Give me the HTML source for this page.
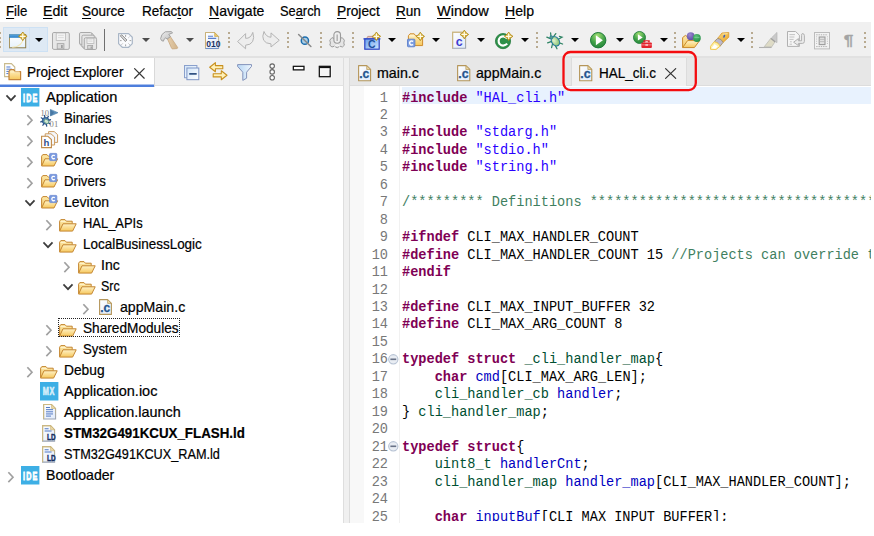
<!DOCTYPE html>
<html><head><meta charset="utf-8"><title>IDE</title>
<style>
html,body{margin:0;padding:0;background:#fff;}
body{width:874px;height:536px;position:relative;overflow:hidden;font-family:"Liberation Sans",sans-serif;font-kerning:none;}
.abs{position:absolute;}
.t{-webkit-text-stroke:0.22px currentColor;position:absolute;white-space:nowrap;transform-origin:0 0;line-height:20px;height:20px;font-family:"Liberation Sans",sans-serif;}
u{text-decoration:underline;text-underline-offset:2px;text-decoration-thickness:1px;}
#clip{position:absolute;left:0;top:0;width:871px;height:522.5px;overflow:hidden;background:#fff;}
#toolbar{position:absolute;left:0;top:21.7px;width:871px;height:34.6px;background:#f0f0f0;}
#tbline{position:absolute;left:0;top:56.2px;width:871px;height:1.7px;background:#e1e1e1;}
#lhead{position:absolute;left:0;top:57.9px;width:343px;height:27.6px;background:#f1f1f1;border-right:1px solid #dedede;border-bottom:1px solid #e2e2e2;}
#ltab{position:absolute;left:0;top:58px;width:154px;height:29px;background:#fff;border-right:1px solid #d9d9d9;}
#lblue{position:absolute;left:0;top:85px;width:154px;height:2px;background:#4d7edc;border-top:1px solid #a9c0ee;margin-top:-1px;}
#lbody{position:absolute;left:0;top:86.3px;width:343px;height:440px;background:#fff;border-right:1px solid #dedede;}
#sash{position:absolute;left:344px;top:57.9px;width:5.2px;height:470px;background:#f0f0f0;}
#ehead{position:absolute;left:349.2px;top:57.9px;width:522px;height:27.6px;background:#e7e7e7;border-left:1px solid #dcdcdc;border-bottom:1px solid #dddddd;}
#etab{position:absolute;left:571px;top:57.9px;width:115.5px;height:28.4px;background:#f1f1f1;border-left:1px solid #dcdcdc;border-right:1px solid #dcdcdc;box-sizing:border-box;}
#ebody{position:absolute;left:349.2px;top:86.3px;width:522px;height:440px;background:#fff;border-left:1px solid #dcdcdc;}
#ruler{position:absolute;left:350.2px;top:86.3px;width:14px;height:440px;background:#f8f8f8;}
#hl{position:absolute;left:401.8px;top:86.6px;width:470px;height:17.6px;background:#e8f2fe;}
.ln{position:absolute;left:363.4px;width:25px;transform-origin:100% 0;transform:scaleX(0.9714);text-align:right;font-family:"Liberation Mono",monospace;font-size:14px;line-height:17.46px;height:17.46px;color:#787878;white-space:pre;}
.cl{position:absolute;left:402.2px;transform-origin:0 0;transform:scaleX(0.9714);font-family:"Liberation Mono",monospace;font-size:14px;line-height:17.46px;height:17.46px;color:#000;white-space:pre;letter-spacing:0px;}
.k{color:#7f0055;font-weight:bold;}
.s{color:#2a00ff;}
.c{color:#3f7f5f;}
.f{color:#0000c0;}
.ty{color:#005032;}
.ic{position:absolute;overflow:visible;}
.hover{position:absolute;left:3.4px;top:27.3px;width:44.4px;height:24.4px;box-sizing:border-box;background:#dee9f4;border:1px solid #cde1f4;}
.hover i{position:absolute;left:24.5px;top:0;width:1px;height:100%;background:#d3e4f4;}
.dd{position:absolute;width:0;height:0;border-left:4.3px solid transparent;border-right:4.3px solid transparent;border-top:4.6px solid #000;}
.dd.g{border-top-color:#4c4c4c;}
.sepd{position:absolute;width:2px;height:16.4px;top:32.2px;background:repeating-linear-gradient(to bottom,#b8aa90 0,#b8aa90 1.9px,transparent 1.9px,transparent 4.72px);}
.sepd.w{}
</style></head><body><div id="clip">

<span class="t" style="left:5.80px;top:1.20px;font-size:15.00px;transform:scaleX(0.8854);color:#000;"><u>F</u>ile</span>
<span class="t" style="left:42.90px;top:1.20px;font-size:15.00px;transform:scaleX(0.9440);color:#000;"><u>E</u>dit</span>
<span class="t" style="left:82.20px;top:1.20px;font-size:15.00px;transform:scaleX(0.9005);color:#000;"><u>S</u>ource</span>
<span class="t" style="left:141.50px;top:1.20px;font-size:15.00px;transform:scaleX(0.9014);color:#000;">Refac<u>t</u>or</span>
<span class="t" style="left:208.80px;top:1.20px;font-size:15.00px;transform:scaleX(0.9341);color:#000;"><u>N</u>avigate</span>
<span class="t" style="left:279.90px;top:1.20px;font-size:15.00px;transform:scaleX(0.8564);color:#000;">Se<u>a</u>rch</span>
<span class="t" style="left:337.20px;top:1.20px;font-size:15.00px;transform:scaleX(0.9146);color:#000;"><u>P</u>roject</span>
<span class="t" style="left:396.00px;top:1.20px;font-size:15.00px;transform:scaleX(0.9049);color:#000;"><u>R</u>un</span>
<span class="t" style="left:437.10px;top:1.20px;font-size:15.00px;transform:scaleX(0.9672);color:#000;"><u>W</u>indow</span>
<span class="t" style="left:505.10px;top:1.20px;font-size:15.00px;transform:scaleX(0.9400);color:#000;"><u>H</u>elp</span>
<div id="toolbar"></div><div id="tbline"></div>
<div id="lhead"></div><div id="lbody"></div><div id="ltab"></div><div id="lblue"></div><div id="sash"></div>
<div id="ehead"></div><div id="etab"></div><div id="ebody"></div><div id="ruler"></div><div id="hl"></div>
<svg width="0" height="0" style="position:absolute"><defs>
<linearGradient id="gWin" x1="0" y1="0" x2="0" y2="1"><stop offset="0" stop-color="#ffffff"/><stop offset="1" stop-color="#e6f2fb"/></linearGradient>
<linearGradient id="gTitle" x1="0" y1="0" x2="0" y2="1"><stop offset="0" stop-color="#5fa9e2"/><stop offset="1" stop-color="#2b7fc6"/></linearGradient>
<linearGradient id="gStar" x1="0" y1="0" x2="1" y2="1"><stop offset="0" stop-color="#e9c95a"/><stop offset="1" stop-color="#c79a1c"/></linearGradient>
<linearGradient id="gFold" x1="0" y1="0" x2="0" y2="1"><stop offset="0" stop-color="#fff3c8"/><stop offset="1" stop-color="#f6c75c"/></linearGradient>
<linearGradient id="gFoldB" x1="0" y1="0" x2="0" y2="1"><stop offset="0" stop-color="#fde9a8"/><stop offset="1" stop-color="#f3c869"/></linearGradient>
<linearGradient id="gDoc" x1="0" y1="0" x2="1" y2="1"><stop offset="0" stop-color="#ffffff"/><stop offset="1" stop-color="#dfeafb"/></linearGradient>
<linearGradient id="gDocS" x1="0" y1="0" x2="0" y2="1"><stop offset="0" stop-color="#c9b57c"/><stop offset="1" stop-color="#9aa3b4"/></linearGradient>
<linearGradient id="gCbox" x1="0" y1="0" x2="1" y2="1"><stop offset="0" stop-color="#6aa2ee"/><stop offset="1" stop-color="#cfe5fc"/></linearGradient>
<radialGradient id="gPlay" cx="0.45" cy="0.2" r="0.9"><stop offset="0" stop-color="#9fdc72"/><stop offset="0.55" stop-color="#3fa047"/><stop offset="1" stop-color="#1f7f3a"/></radialGradient>
<radialGradient id="gBug" cx="0.4" cy="0.35" r="0.8"><stop offset="0" stop-color="#e3f3cf"/><stop offset="1" stop-color="#6fb45a"/></radialGradient>
<radialGradient id="gPurple" cx="0.4" cy="0.3" r="0.8"><stop offset="0" stop-color="#9a8ad0"/><stop offset="1" stop-color="#5a45a0"/></radialGradient>
<radialGradient id="gGreen" cx="0.4" cy="0.3" r="0.8"><stop offset="0" stop-color="#5cc07a"/><stop offset="1" stop-color="#1f8a42"/></radialGradient>
<linearGradient id="gGold" x1="0" y1="0" x2="1" y2="1"><stop offset="0" stop-color="#f9d982"/><stop offset="1" stop-color="#e8a428"/></linearGradient>
<linearGradient id="gFun" x1="0" y1="0" x2="1" y2="0"><stop offset="0" stop-color="#b7d6f4"/><stop offset="1" stop-color="#eef6fd"/></linearGradient>
<linearGradient id="gCol" x1="0" y1="0" x2="1" y2="1"><stop offset="0" stop-color="#d3e6f9"/><stop offset="1" stop-color="#ffffff"/></linearGradient>
<linearGradient id="gHam" x1="0" y1="0" x2="1" y2="1"><stop offset="0" stop-color="#f0f0f0"/><stop offset="1" stop-color="#b9b9b9"/></linearGradient>
<linearGradient id="gHandle" x1="0" y1="0" x2="1" y2="0"><stop offset="0" stop-color="#e6cfae"/><stop offset="1" stop-color="#d2b48a"/></linearGradient>
</defs></svg>
<div class="sepd" style="left:-0.8px;top:32.4px;width:2px"></div>
<div class="hover"><i></i></div>
<svg class="ic" style="left:9.00px;top:32.00px;" width="18.00" height="16.40" viewBox="0 0 18.00 16.40" preserveAspectRatio="none"><rect x="0.5" y="2.6" width="16.2" height="13.2" fill="url(#gWin)" stroke="#8d7d49" stroke-width="1"/><path d="M14.2 6.2C13.6 11.5 9.5 15 3.2 15.4" fill="none" stroke="#f3e3a2" stroke-width="1.1" opacity="0.85"/><rect x="0.3" y="2.2" width="10.6" height="3.6" fill="url(#gTitle)"/><path d="M0.5 6V15.8" stroke="#a89763" stroke-width="1"/><polygon points="13.80,0.00 15.61,2.49 18.10,4.30 15.61,6.11 13.80,8.60 11.99,6.11 9.50,4.30 11.99,2.49" fill="url(#gStar)" stroke="#b38b1a" stroke-width="0.9" stroke-linejoin="round"/><path d="M13.80 1.93V6.67M11.44 4.30H16.16" stroke="#fffbe6" stroke-width="1.25" stroke-linecap="round" fill="none"/></svg>
<div class="dd " style="left:34.80px;top:37.9px"></div>
<svg class="ic" style="left:52.30px;top:31.80px;" width="17.80" height="17.90" viewBox="0 0 17.80 17.90" preserveAspectRatio="none"><rect x="0.50" y="0.50" width="16.80" height="16.90" rx="1.4" fill="#e7e7e7" stroke="#a9a9a9" stroke-width="1"/><rect x="4.20" y="1.00" width="9.41" height="7.60" fill="#f3f3f3" stroke="#b9b9b9" stroke-width="0.8"/><path d="M6.04 3.37H11.76M6.04 5.57H11.76" stroke="#d3d3d3" stroke-width="0.7"/><rect x="5.20" y="11.65" width="6.72" height="5.25" fill="#dadada" stroke="#a3a3a3" stroke-width="0.8"/><rect x="9.24" y="13.01" width="1.34" height="3.04" fill="#8f8f8f"/></svg>
<svg class="ic" style="left:79.00px;top:31.80px;" width="18.20" height="18.00" viewBox="0 0 18.20 18.00" preserveAspectRatio="none"><rect x="0.50" y="0.50" width="12.40" height="11.90" rx="1.4" fill="#e7e7e7" stroke="#a9a9a9" stroke-width="1"/><path d="M0.9 12.2L5.6 17.4M12.7 0.9L17.3 6" stroke="#a9a9a9" stroke-width="0.9"/><rect x="2.90" y="3.20" width="12.40" height="11.90" rx="1.4" fill="#e7e7e7" stroke="#a9a9a9" stroke-width="1"/><rect x="5.30" y="5.80" width="12.30" height="11.70" rx="1.4" fill="#e7e7e7" stroke="#a9a9a9" stroke-width="1"/><rect x="8.01" y="6.30" width="6.89" height="5.26" fill="#f3f3f3" stroke="#b9b9b9" stroke-width="0.8"/><path d="M9.36 7.79H13.54M9.36 9.31H13.54" stroke="#d3d3d3" stroke-width="0.7"/><rect x="8.74" y="13.52" width="4.92" height="3.48" fill="#dadada" stroke="#a3a3a3" stroke-width="0.8"/><rect x="11.70" y="14.46" width="0.98" height="2.11" fill="#8f8f8f"/></svg>
<div class="abs" style="left:103.8px;top:29.4px;width:1.3px;height:21.5px;background:#6f6f6f"></div>
<svg class="ic" style="left:118.00px;top:33.30px;" width="14.90" height="14.90" viewBox="0 0 14.90 14.90" preserveAspectRatio="none"><polygon points="0.6,0.6 10.6,0.6 14.3,4.3 14.3,10.6 10.6,14.3 4.3,14.3 0.6,10.6" fill="#fafbfd" stroke="#a9b6c6" stroke-width="1.2" stroke-linejoin="round"/><g stroke="#9a9a9a" stroke-width="0.9"><path d="M7.6 2V3.8M7.6 11.4V13.2M2 7.6H3.6M11.6 7.6H13.2M3.6 11.6L4.6 10.6M11.6 11.6L10.6 10.6M11.4 3.8L10.6 4.6"/></g><path d="M2.2 2.8L3.8 1.8L9 7L7.4 8.6Z" fill="#d4d4d4" stroke="#8f8f8f" stroke-width="0.9"/></svg>
<div class="dd g" style="left:141.90px;top:37.9px"></div>
<svg class="ic" style="left:159.90px;top:30.90px;" width="18.10" height="18.10" viewBox="0 0 18.10 18.10" preserveAspectRatio="none"><path d="M7.2 7.2L10.2 5.4L17.6 16.4Q17.9 17.2 17 17.6L12.6 17.9Q11.8 17.8 11.5 17Z" fill="url(#gHandle)" stroke="#c6a67d" stroke-width="0.8"/><path d="M0.6 7.6Q1 3 5.2 0.8L11.2 0.6L12.6 1.8L8.8 3.4L10.4 5.6L7 8.2L5.8 6.8Q3.6 8 3.4 10.2L1.6 9.6Z" fill="url(#gHam)" stroke="#9b9b9b" stroke-width="0.9" stroke-linejoin="round"/></svg>
<div class="dd g" style="left:186.30px;top:37.9px"></div>
<svg class="ic" style="left:205.20px;top:32.00px;" width="15.60" height="17.00" viewBox="0 0 15.60 17.00" preserveAspectRatio="none"><path d="M0.5 0.5H9.6L13.6 4.5V16.5H0.5Z" fill="url(#gDoc)" stroke="url(#gDocS)" stroke-width="1"/><path d="M0.5 16.5V0.5H9.6" fill="none" stroke="#c9b27a" stroke-width="1"/><path d="M0.5 16.5H13.6" stroke="#6f8fc4" stroke-width="1.1"/><path d="M9.6 0.5V4.5H13.6Z" fill="#e9c66a" stroke="#c9a648" stroke-width="0.6"/><path d="M3 4.2H8M3 6.4H11.2" stroke="#5b7fca" stroke-width="1.1"/><text x="1.3" y="15.2" font-family="Liberation Sans, sans-serif" font-weight="bold" font-size="8.6" fill="#1b3263" textLength="14.2" lengthAdjust="spacingAndGlyphs">010</text></svg>
<div class="sepd" style="left:227.60px"></div>
<svg class="ic" style="left:236.80px;top:32.00px;" width="17.00" height="17.00" viewBox="0 0 17.00 17.00" preserveAspectRatio="none"><path d="M0.6 9.6L8.6 1.6V6.3Q13.6 6.8 15.8 0.4Q17.6 6 15.6 9.6Q13.6 13 8.6 13.2V16.8Z" fill="#ededed" stroke="#b4b4b4" stroke-width="1" stroke-linejoin="round"/></svg>
<svg class="ic" style="left:262.10px;top:30.90px;" width="17.90" height="16.40" viewBox="0 0 17.90 16.40" preserveAspectRatio="none"><path d="M17.3 9.3L9 1.9V6.2Q4.2 6.2 2 0.5Q-0.2 5.6 1.6 9.2Q3.6 12.6 9 12.9V16Z" fill="#ededed" stroke="#b4b4b4" stroke-width="1" stroke-linejoin="round"/></svg>
<div class="sepd" style="left:287.10px"></div>
<svg class="ic" style="left:298.00px;top:34.00px;" width="13.60" height="13.00" viewBox="0 0 13.60 13.00" preserveAspectRatio="none"><circle cx="6.9" cy="6.7" r="3.6" fill="#a9cfe9" stroke="#1c6dad" stroke-width="1.5"/><path d="M0.6 0.5L12.9 12.5" stroke="#8a8a8a" stroke-width="1.5" stroke-linecap="round"/></svg>
<div class="sepd" style="left:319.70px"></div>
<svg class="ic" style="left:329.00px;top:31.00px;" width="16.20" height="17.40" viewBox="0 0 16.20 17.40" preserveAspectRatio="none"><path d="M0.8 9.2L3 6.6L5.2 7.6L11 7.6L13.2 6.6L15.4 9.2L14.8 12L15.4 14.2L13.4 16L11 15.2L8.2 16.8L5.4 15.2L3 16L0.8 14.2L1.4 12Z" fill="#e5e5e5" stroke="#9d9d9d" stroke-width="1" stroke-linejoin="round"/><rect x="4.9" y="0.6" width="6.6" height="11.6" rx="3.2" fill="#efefef" stroke="#9a9a9a" stroke-width="1.1"/><path d="M8.2 3.4V10" stroke="#b5b5b5" stroke-width="1.6"/><path d="M5.4 15.4L8.2 13.8L11 15.4" fill="none" stroke="#fafafa" stroke-width="1"/></svg>
<div class="sepd" style="left:352.40px"></div>
<svg class="ic" style="left:362.60px;top:31.60px;" width="17.80" height="17.80" viewBox="0 0 17.80 17.80" preserveAspectRatio="none"><path d="M3.6 6.6L4.8 4.4H9L10 6.6" fill="#e9c9c0" stroke="#b88a84" stroke-width="0.9"/><path d="M0.4 6.9H17.4" stroke="#2b44c4" stroke-width="1.3"/><rect x="1.8" y="7" width="14.4" height="10.2" fill="url(#gCbox)" stroke="#2b44c4" stroke-width="1.2"/><text x="5" y="15.6" font-family="Liberation Sans, sans-serif" font-weight="bold" font-size="10.5" fill="#1b4f9e">C</text><polygon points="13.40,0.10 15.16,2.54 17.60,4.30 15.16,6.06 13.40,8.50 11.64,6.06 9.20,4.30 11.64,2.54" fill="url(#gStar)" stroke="#b38b1a" stroke-width="0.9" stroke-linejoin="round"/><path d="M13.40 1.99V6.61M11.09 4.30H15.71" stroke="#fffbe6" stroke-width="1.25" stroke-linecap="round" fill="none"/></svg>
<div class="dd " style="left:387.90px;top:37.9px"></div>
<svg class="ic" style="left:407.00px;top:31.50px;" width="17.60" height="15.40" viewBox="0 0 17.60 15.40" preserveAspectRatio="none"><path d="M1.4 13.6V3.8L3 1.8H7.2L8.6 3.8H15.6V13.6Z" fill="url(#gFold)" stroke="#d08c2c" stroke-width="1" stroke-linejoin="round"/><path d="M2.4 3.9H7.6" stroke="#fff7da" stroke-width="0.9"/><rect x="0.5" y="7.2" width="7.4" height="7.6" rx="0.8" fill="#7e9fe2" stroke="#5c80cc" stroke-width="0.9"/><path d="M6.2 9.4Q3.2 8 2.6 10.9Q3 13.9 6.2 12.6" fill="none" stroke="#fff" stroke-width="1.5"/><polygon points="13.30,0.20 15.06,2.64 17.50,4.40 15.06,6.16 13.30,8.60 11.54,6.16 9.10,4.40 11.54,2.64" fill="url(#gStar)" stroke="#b38b1a" stroke-width="0.9" stroke-linejoin="round"/><path d="M13.30 2.09V6.71M10.99 4.40H15.61" stroke="#fffbe6" stroke-width="1.25" stroke-linecap="round" fill="none"/></svg>
<div class="dd " style="left:432.30px;top:37.9px"></div>
<svg class="ic" style="left:452.40px;top:30.40px;" width="16.80" height="18.80" viewBox="0 0 16.80 18.80" preserveAspectRatio="none"><path d="M0.6 2.2H13.6V18.2H0.6Z" fill="url(#gDoc)" stroke="url(#gDocS)" stroke-width="1.1"/><path d="M0.6 18.2V2.2H10" fill="none" stroke="#cbb782" stroke-width="1.1"/><text x="3.8" y="15.6" font-family="Liberation Sans, sans-serif" font-weight="bold" font-size="12.5" fill="#3d3ed0">c</text><polygon points="12.30,0.20 14.11,2.69 16.60,4.50 14.11,6.31 12.30,8.80 10.49,6.31 8.00,4.50 10.49,2.69" fill="url(#gStar)" stroke="#b38b1a" stroke-width="0.9" stroke-linejoin="round"/><path d="M12.30 2.13V6.87M9.94 4.50H14.67" stroke="#fffbe6" stroke-width="1.25" stroke-linecap="round" fill="none"/></svg>
<div class="dd " style="left:476.80px;top:37.9px"></div>
<svg class="ic" style="left:495.20px;top:31.60px;" width="18.00" height="17.10" viewBox="0 0 18.00 17.10" preserveAspectRatio="none"><circle cx="8" cy="9.1" r="7.6" fill="#2e8f49"/><circle cx="8" cy="9.1" r="7.6" fill="none" stroke="#247a3c" stroke-width="0.8"/><path d="M12.3 6.6Q9 2.8 5.2 5.4Q2.4 8.4 4.6 12Q8 15.2 12.3 11.8" fill="none" stroke="#fff" stroke-width="2.1"/><circle cx="8.2" cy="9.2" r="2.1" fill="#2e8f49"/><polygon points="13.70,0.10 15.46,2.54 17.90,4.30 15.46,6.06 13.70,8.50 11.94,6.06 9.50,4.30 11.94,2.54" fill="url(#gStar)" stroke="#b38b1a" stroke-width="0.9" stroke-linejoin="round"/><path d="M13.70 1.99V6.61M11.39 4.30H16.01" stroke="#fffbe6" stroke-width="1.25" stroke-linecap="round" fill="none"/></svg>
<div class="dd " style="left:521.10px;top:37.9px"></div>
<div class="sepd" style="left:535.50px"></div>
<svg class="ic" style="left:545.90px;top:32.00px;" width="17.40" height="17.50" viewBox="0 0 17.40 17.50" preserveAspectRatio="none"><g stroke="#2f8464" stroke-width="1.25" stroke-linecap="round" fill="none"><path d="M5 5.4L4.6 0.8M7.4 4.8L9.8 1.6M4.4 6.6L0.8 5.2M5 9.6L1.6 10.8M6.4 12.4L5.6 15.6M9.4 13.6L11 16.8M12.6 10.6L16.6 12M12.4 7.2L16 5.2L13.4 4.4"/></g><ellipse cx="9.4" cy="9.3" rx="3.7" ry="5" transform="rotate(-38 9.4 9.3)" fill="url(#gBug)" stroke="#257a9a" stroke-width="1.1"/><circle cx="5.4" cy="5.4" r="1.6" fill="#5a9e88" stroke="#257a9a" stroke-width="0.8"/></svg>
<div class="dd " style="left:571.20px;top:37.9px"></div>
<svg class="ic" style="left:590.00px;top:32.00px;" width="16.40" height="16.40" viewBox="0 0 16.40 16.40" preserveAspectRatio="none"><circle cx="8.2" cy="8.2" r="7.7" fill="url(#gPlay)" stroke="#1e7a38" stroke-width="1"/><path d="M5.9 3.3V13.3L12.9 8.3Z" fill="#fff"/></svg>
<div class="dd " style="left:615.60px;top:37.9px"></div>
<svg class="ic" style="left:633.00px;top:30.80px;" width="19.10" height="17.20" viewBox="0 0 19.10 17.20" preserveAspectRatio="none"><circle cx="6.5" cy="6.5" r="6" fill="url(#gPlay)" stroke="#23803c" stroke-width="0.9"/><path d="M4.9 3.2V9.6L9.7 6.4Z" fill="#fff"/><path d="M11.2 11.6V10H16V11.6" fill="none" stroke="#e0202b" stroke-width="1.5"/><rect x="8.4" y="11.6" width="10.5" height="5.4" rx="1" fill="#e3232e"/><path d="M8.4 13.9H18.9" stroke="#f7a0a4" stroke-width="0.8"/><rect x="12.4" y="13" width="2.6" height="1.9" fill="#f7b7ba"/><path d="M12.6 10.6H14.8" stroke="#f9c6c8" stroke-width="1"/></svg>
<div class="dd " style="left:659.90px;top:37.9px"></div>
<div class="sepd" style="left:674.20px"></div>
<svg class="ic" style="left:682.00px;top:31.80px;" width="19.20" height="16.20" viewBox="0 0 19.20 16.20" preserveAspectRatio="none"><path d="M0.6 15.4V5.6L3.4 3.4L6 5H11V8.4" fill="url(#gFoldB)" stroke="#c98a2a" stroke-width="1" stroke-linejoin="round"/><path d="M0.6 15.6L5.6 8.6H17.6L12.4 15.6Z" fill="url(#gFold)" stroke="#c98a2a" stroke-width="1" stroke-linejoin="round"/><circle cx="8.7" cy="4.2" r="3.9" fill="url(#gPurple)"/><circle cx="14.9" cy="6" r="3.9" fill="url(#gGreen)"/><path d="M12.4 5.4H17.4" stroke="#7fd29a" stroke-width="0.8"/></svg>
<svg class="ic" style="left:710.00px;top:31.60px;" width="19.40" height="18.40" viewBox="0 0 19.40 18.40" preserveAspectRatio="none"><path d="M11.9 1L18.8 0.5L18.8 5.2L13.1 10.4L7.7 6.4Z" fill="url(#gGold)" stroke="#dc9c30" stroke-width="0.8" stroke-linejoin="round"/><path d="M12.6 2.2L17.6 1.6" stroke="#fbe6a6" stroke-width="0.9"/><ellipse cx="14.2" cy="4.2" rx="0.85" ry="1.6" transform="rotate(22 14.2 4.2)" fill="#3a5fc0"/><path d="M7.7 6.4Q11.6 6.6 13.1 10.4L10.1 14.2Q8.6 10.4 4.1 9.7Z" fill="#bcb8cc" stroke="#a58f60" stroke-width="0.9" stroke-linejoin="round"/><path d="M4.1 9.7Q8.6 10.4 10.1 14.2L6 17.6L0.5 17.3L0.5 14.4Z" fill="#fdf0a8" stroke="#f2c548" stroke-width="0.9" stroke-linejoin="round"/><path d="M1.4 16.4L4.6 12L7.8 14.6L5.4 16.8Z" fill="#ffffff"/></svg>
<div class="dd " style="left:736.80px;top:37.9px"></div>
<div class="sepd" style="left:751.00px"></div>
<svg class="ic" style="left:759.20px;top:32.00px;" width="18.40" height="16.20" viewBox="0 0 18.40 16.20" preserveAspectRatio="none"><path d="M0 15.5H12.6" stroke="#b0b0b0" stroke-width="1.1"/><path d="M12.6 5.8L18 0.4V10.6L16.2 9.8Z" fill="#c9c9c9" stroke="#b4b4b4" stroke-width="0.7"/><path d="M5.2 14.8L11.8 6.4L16 9.8L12.8 14.8Z" fill="#dedbc6" stroke="#bdbdb4" stroke-width="0.8"/><path d="M11.8 6.4L16 9.8" stroke="#9c9c9c" stroke-width="1.2"/></svg>
<svg class="ic" style="left:787.00px;top:31.00px;" width="18.20" height="16.00" viewBox="0 0 18.20 16.00" preserveAspectRatio="none"><path d="M0.5 0.5H8.6L12.4 4.2V15.4H0.5Z" fill="#f5f5f5" stroke="#b1b1b1" stroke-width="1"/><path d="M2.4 3.6H8M2.4 6H7.4M2.4 8.4H6.6M3 10.8H4.8M2.6 13.2H5" stroke="#bdbdbd" stroke-width="0.9"/><path d="M15.2 2.6Q17.4 2.4 17.4 4.6V10.4Q17.4 12.4 15.4 12.4H11.4V14.6L6.6 11.2L11.4 7.6V9.8H14.6V4.6Q14.6 2.6 15.2 2.6Z" fill="#ececec" stroke="#a9a9a9" stroke-width="0.9" stroke-linejoin="round"/></svg>
<svg class="ic" style="left:814.00px;top:31.90px;" width="16.00" height="17.40" viewBox="0 0 16.00 17.40" preserveAspectRatio="none"><rect x="0.5" y="0.5" width="15" height="16.4" fill="#f3f3f3" stroke="#bcbcbc" stroke-width="1"/><path d="M2.2 2.8H13.8M2.2 14.6H13.8" stroke="#a8a8a8" stroke-width="0.9" stroke-dasharray="1.4 0.9"/><path d="M2.6 4.4V13M13.4 4.4V13" stroke="#b4b4b4" stroke-width="0.9" stroke-dasharray="0.9 1.3"/><rect x="5.2" y="5" width="5.8" height="7.6" fill="#e2e2e2" stroke="#9c9c9c" stroke-width="1.1"/><path d="M5.2 7.4H11M5.2 9.6H11" stroke="#b6b6b6" stroke-width="0.8"/></svg>
<svg class="ic" style="left:843.00px;top:33.00px;" width="13.00" height="16.00" viewBox="0 0 13.00 16.00" preserveAspectRatio="none"><text transform="translate(0.8,11.9) scale(1.12,1)" font-family="Liberation Sans, sans-serif" font-weight="bold" font-size="15.4" fill="#a4a4a4" stroke="#a4a4a4" stroke-width="0.3">&#182;</text></svg>
<div class="sepd" style="left:864.40px"></div>
<span class="t" style="left:26.70px;top:62.20px;font-size:15.00px;transform:scaleX(0.9034);color:#000;">Project Explorer</span>
<span class="t" style="left:45.50px;top:86.50px;font-size:15.00px;transform:scaleX(0.9716);color:#000;">Application</span>
<span class="t" style="left:64.40px;top:107.50px;font-size:15.00px;transform:scaleX(0.8784);color:#000;">Binaries</span>
<span class="t" style="left:64.40px;top:128.50px;font-size:15.00px;transform:scaleX(0.9200);color:#000;">Includes</span>
<span class="t" style="left:64.40px;top:149.50px;font-size:15.00px;transform:scaleX(0.8981);color:#000;">Core</span>
<span class="t" style="left:64.40px;top:170.50px;font-size:15.00px;transform:scaleX(0.8800);color:#000;">Drivers</span>
<span class="t" style="left:64.40px;top:191.50px;font-size:15.00px;transform:scaleX(0.9324);color:#000;">Leviton</span>
<span class="t" style="left:83.10px;top:212.50px;font-size:15.00px;transform:scaleX(0.8613);color:#000;">HAL_APIs</span>
<span class="t" style="left:83.10px;top:233.50px;font-size:15.00px;transform:scaleX(0.8960);color:#000;">LocalBusinessLogic</span>
<span class="t" style="left:101.40px;top:254.50px;font-size:15.00px;transform:scaleX(0.9345);color:#000;">Inc</span>
<span class="t" style="left:101.40px;top:275.50px;font-size:15.00px;transform:scaleX(0.8311);color:#000;">Src</span>
<span class="t" style="left:120.30px;top:296.50px;font-size:15.00px;transform:scaleX(0.9421);color:#000;">appMain.c</span>
<span class="t" style="left:83.10px;top:317.50px;font-size:15.00px;transform:scaleX(0.9099);color:#000;">SharedModules</span>
<span class="t" style="left:83.10px;top:338.50px;font-size:15.00px;transform:scaleX(0.8798);color:#000;">System</span>
<span class="t" style="left:64.40px;top:359.50px;font-size:15.00px;transform:scaleX(0.9185);color:#000;">Debug</span>
<span class="t" style="left:64.40px;top:380.50px;font-size:15.00px;transform:scaleX(0.9656);color:#000;">Application.ioc</span>
<span class="t" style="left:64.40px;top:401.50px;font-size:15.00px;transform:scaleX(0.9585);color:#000;">Application.launch</span>
<span class="t" style="left:64.10px;top:422.50px;font-size:15.00px;transform:scaleX(0.8895);font-weight:bold;color:#000;">STM32G491KCUX_FLASH.ld</span>
<span class="t" style="left:64.10px;top:443.50px;font-size:15.00px;transform:scaleX(0.8462);color:#000;">STM32G491KCUX_RAM.ld</span>
<span class="t" style="left:45.50px;top:464.50px;font-size:15.00px;transform:scaleX(0.9414);color:#000;">Bootloader</span>
<svg class="ic" style="left:3.60px;top:63.40px;" width="17.30" height="17.30" viewBox="0 0 17.30 17.30" preserveAspectRatio="none"><path d="M0.6 0.6H7.4L10.8 4V13.6H0.6Z" fill="#ffffff" stroke="#c9ba8c" stroke-width="1.1"/><path d="M2.4 4H6.4M2.4 6.2H8M2.4 8.4H5M2.4 10.6H4.4" stroke="#4a78d0" stroke-width="1"/><path d="M5 16.7V8.4L6.4 6.6H9.8L11 8.6H16.6V16.7Z" fill="url(#gFold)" stroke="#c4843a" stroke-width="1.2" stroke-linejoin="round"/><path d="M6.6 9H15.6" stroke="#fff4cc" stroke-width="0.9"/></svg>
<svg class="ic" style="left:134.00px;top:68.10px;" width="10.80" height="10.80" viewBox="0 0 10.80 10.80" preserveAspectRatio="none"><path d="M0.6 0.6L10.2 10.2M10.2 0.6L0.6 10.2" stroke="#383838" stroke-width="1.25" stroke-linecap="round"/></svg>
<svg class="ic" style="left:184.10px;top:64.60px;" width="15.30" height="15.20" viewBox="0 0 15.30 15.20" preserveAspectRatio="none"><rect x="0.5" y="0.5" width="12.4" height="12.2" fill="url(#gCol)" stroke="#8aa0cc" stroke-width="1"/><rect x="2.9" y="3" width="11.9" height="11.7" fill="url(#gCol)" stroke="#7f96c6" stroke-width="1"/><path d="M5.2 8.9H12.7" stroke="#12386f" stroke-width="1.5"/></svg>
<svg class="ic" style="left:209.00px;top:62.00px;" width="18.70" height="18.50" viewBox="0 0 18.70 18.50" preserveAspectRatio="none"><path d="M0.7 5.2L6.4 0.7V3.6H13.8V6.8H6.4V9.7Z" fill="#fff1b8" stroke="#c8901e" stroke-width="1.1" stroke-linejoin="round"/><path d="M18 13.3L12.3 8.8V11.7H4.2V14.9H12.3V17.8Z" fill="#fff1b8" stroke="#c8901e" stroke-width="1.1" stroke-linejoin="round"/></svg>
<svg class="ic" style="left:236.80px;top:63.70px;" width="15.10" height="17.10" viewBox="0 0 15.10 17.10" preserveAspectRatio="none"><path d="M0.6 0.6H14.5V2.4L9.6 8.2V14.2L5.8 16.4V8.2L0.6 2.4Z" fill="url(#gFun)" stroke="#8493bb" stroke-width="1" stroke-linejoin="round"/></svg>
<svg class="ic" style="left:268.70px;top:63.10px;" width="6.40" height="17.80" viewBox="0 0 6.40 17.80" preserveAspectRatio="none"><circle cx="3.2" cy="3.1" r="2.25" fill="#fdfdfd" stroke="#666" stroke-width="1.1"/><circle cx="3.2" cy="8.9" r="2.25" fill="#fdfdfd" stroke="#666" stroke-width="1.1"/><circle cx="3.2" cy="14.7" r="2.25" fill="#fdfdfd" stroke="#666" stroke-width="1.1"/></svg>
<svg class="ic" style="left:291.60px;top:65.10px;" width="13.30" height="6.20" viewBox="0 0 13.30 6.20" preserveAspectRatio="none"><rect x="0" y="0" width="13.3" height="6.2" fill="#fff" opacity="0.9"/><rect x="1.3" y="1.3" width="10.7" height="3.6" fill="#fff" stroke="#111" stroke-width="1.3"/></svg>
<svg class="ic" style="left:318.40px;top:65.10px;" width="13.50" height="13.00" viewBox="0 0 13.50 13.00" preserveAspectRatio="none"><rect x="0" y="0" width="13.5" height="13" fill="#fff" opacity="0.9"/><rect x="1.3" y="1.3" width="10.9" height="10.4" fill="#f4f4f4" stroke="#111" stroke-width="1.3"/><path d="M1.3 2.4H12.2" stroke="#111" stroke-width="1.6"/><path d="M2 4H11.5" stroke="#fff" stroke-width="0.8"/></svg>
<svg class="ic" style="left:5.90px;top:94.70px;" width="10.00" height="6.60" viewBox="0 0 10.00 6.60" preserveAspectRatio="none"><path d="M1.1 1.1L5 5.1L8.9 1.1" fill="none" stroke="#3c3c3c" stroke-width="1.8" stroke-linecap="square" stroke-linejoin="miter"/></svg>
<svg class="ic" style="left:21.10px;top:88.40px;" width="18.40" height="18.50" viewBox="0 0 18.40 18.50" preserveAspectRatio="none"><rect x="0" y="0" width="18.4" height="18.5" fill="#3dafe5"/><text transform="translate(2.10,13.50) scale(0.660,1)" font-family="Liberation Sans, sans-serif" font-weight="bold" font-size="10.90" letter-spacing="1.70" fill="#ffffff" stroke="#ffffff" stroke-width="0.80">IDE</text></svg>
<svg class="ic" style="left:27.10px;top:114.80px;" width="6.00" height="10.40" viewBox="0 0 6.00 10.40" preserveAspectRatio="none"><path d="M0.9 0.9L5.0 5.2L0.9 9.5" fill="none" stroke="#a0a0a0" stroke-width="1.65" stroke-linecap="square" stroke-linejoin="miter"/></svg>
<svg class="ic" style="left:40.00px;top:109.30px;" width="18.50" height="18.00" viewBox="0 0 18.50 18.00" preserveAspectRatio="none"><text x="0.4" y="7" font-family="Liberation Serif, serif" font-size="8.6" fill="#808080">10</text><text x="9.6" y="17.6" font-family="Liberation Serif, serif" font-size="8.6" fill="#808080">01</text><path d="M10.4 0.4V7L18 3.7Z" fill="#5b8fbb" stroke="#4a7da8" stroke-width="0.6"/><path d="M10.4 0.4V7L14 3.7Z" fill="#4878a4"/><g stroke="#2d5688" stroke-width="1.3" stroke-linecap="round" transform="rotate(-12 5.6 11.8)"><path d="M5.6 6.4V17.2M0.6 11.8H10.6M2 8L9.2 15.6M9.2 8L2 15.6"/></g><circle cx="5.6" cy="11.8" r="3.4" fill="#4c7db4" stroke="#2d5688" stroke-width="0.9"/><ellipse cx="6.4" cy="12.4" rx="2.5" ry="1.9" transform="rotate(35 6.4 12.4)" fill="#cfe6d0" stroke="#5f9a7a" stroke-width="0.7"/></svg>
<svg class="ic" style="left:27.10px;top:135.80px;" width="6.00" height="10.40" viewBox="0 0 6.00 10.40" preserveAspectRatio="none"><path d="M0.9 0.9L5.0 5.2L0.9 9.5" fill="none" stroke="#a0a0a0" stroke-width="1.65" stroke-linecap="square" stroke-linejoin="miter"/></svg>
<svg class="ic" style="left:41.00px;top:131.10px;" width="17.40" height="17.20" viewBox="0 0 17.40 17.20" preserveAspectRatio="none"><path d="M7.6 0.6H13.2L16.6 3.6V11.4H7.6Z" fill="#f4f7fc" stroke="#cc9c5e" stroke-width="1"/><path d="M4.2 2.8H10L13.6 6V14H4.2Z" fill="#f4f7fc" stroke="#cc9c5e" stroke-width="1"/><path d="M0.6 5.2H6.8L10.4 8.6V16.6H0.6Z" fill="#ffffff" stroke="#c08a48" stroke-width="1.1"/><text x="2.4" y="15.2" font-family="Liberation Sans, sans-serif" font-weight="bold" font-size="9.6" fill="#2f4f8a">h</text></svg>
<svg class="ic" style="left:41.30px;top:152.80px;" width="16.80" height="13.60" viewBox="0 0 16.80 13.60" preserveAspectRatio="none"><path d="M0.6 12.6V3.2L1.8 1.6H6L7.4 3.2H12.2V5.8" fill="url(#gFoldB)" stroke="#c48630" stroke-width="1" stroke-linejoin="round"/><path d="M0.6 13L4 5.8H16.6L13 13Z" fill="url(#gFold)" stroke="#c48630" stroke-width="1" stroke-linejoin="round"/><rect x="8.6" y="0.4" width="7.2" height="7.2" rx="0.8" fill="#7b9be0" stroke="#6a88d0" stroke-width="0.8"/><path d="M13.9 2.7Q11.4 1.6 10.8 4Q11.2 6.5 13.9 5.4" fill="none" stroke="#fff" stroke-width="1.3"/></svg>
<svg class="ic" style="left:41.30px;top:173.80px;" width="16.80" height="13.60" viewBox="0 0 16.80 13.60" preserveAspectRatio="none"><path d="M0.6 12.6V3.2L1.8 1.6H6L7.4 3.2H12.2V5.8" fill="url(#gFoldB)" stroke="#c48630" stroke-width="1" stroke-linejoin="round"/><path d="M0.6 13L4 5.8H16.6L13 13Z" fill="url(#gFold)" stroke="#c48630" stroke-width="1" stroke-linejoin="round"/><rect x="8.6" y="0.4" width="7.2" height="7.2" rx="0.8" fill="#7b9be0" stroke="#6a88d0" stroke-width="0.8"/><path d="M13.9 2.7Q11.4 1.6 10.8 4Q11.2 6.5 13.9 5.4" fill="none" stroke="#fff" stroke-width="1.3"/></svg>
<svg class="ic" style="left:41.30px;top:194.80px;" width="16.80" height="13.60" viewBox="0 0 16.80 13.60" preserveAspectRatio="none"><path d="M0.6 12.6V3.2L1.8 1.6H6L7.4 3.2H12.2V5.8" fill="url(#gFoldB)" stroke="#c48630" stroke-width="1" stroke-linejoin="round"/><path d="M0.6 13L4 5.8H16.6L13 13Z" fill="url(#gFold)" stroke="#c48630" stroke-width="1" stroke-linejoin="round"/><rect x="8.6" y="0.4" width="7.2" height="7.2" rx="0.8" fill="#7b9be0" stroke="#6a88d0" stroke-width="0.8"/><path d="M13.9 2.7Q11.4 1.6 10.8 4Q11.2 6.5 13.9 5.4" fill="none" stroke="#fff" stroke-width="1.3"/></svg>
<svg class="ic" style="left:27.10px;top:156.80px;" width="6.00" height="10.40" viewBox="0 0 6.00 10.40" preserveAspectRatio="none"><path d="M0.9 0.9L5.0 5.2L0.9 9.5" fill="none" stroke="#a0a0a0" stroke-width="1.65" stroke-linecap="square" stroke-linejoin="miter"/></svg>
<svg class="ic" style="left:27.10px;top:177.80px;" width="6.00" height="10.40" viewBox="0 0 6.00 10.40" preserveAspectRatio="none"><path d="M0.9 0.9L5.0 5.2L0.9 9.5" fill="none" stroke="#a0a0a0" stroke-width="1.65" stroke-linecap="square" stroke-linejoin="miter"/></svg>
<svg class="ic" style="left:24.60px;top:199.70px;" width="10.00" height="6.60" viewBox="0 0 10.00 6.60" preserveAspectRatio="none"><path d="M1.1 1.1L5 5.1L8.9 1.1" fill="none" stroke="#3c3c3c" stroke-width="1.8" stroke-linecap="square" stroke-linejoin="miter"/></svg>
<svg class="ic" style="left:45.60px;top:219.80px;" width="6.00" height="10.40" viewBox="0 0 6.00 10.40" preserveAspectRatio="none"><path d="M0.9 0.9L5.0 5.2L0.9 9.5" fill="none" stroke="#a0a0a0" stroke-width="1.65" stroke-linecap="square" stroke-linejoin="miter"/></svg>
<svg class="ic" style="left:59.10px;top:218.50px;" width="17.80" height="12.70" viewBox="0 0 17.80 12.70" preserveAspectRatio="none"><path d="M0.6 11.8V2.2L1.8 0.6H6L7.4 2.2H13.2V4.8" fill="url(#gFoldB)" stroke="#c48630" stroke-width="1" stroke-linejoin="round"/><path d="M0.6 12.1L4 4.8H17.2L13.6 12.1Z" fill="url(#gFold)" stroke="#c48630" stroke-width="1" stroke-linejoin="round"/><path d="M1.6 2.4H6.6" stroke="#fff8de" stroke-width="0.8"/></svg>
<svg class="ic" style="left:43.40px;top:241.70px;" width="10.00" height="6.60" viewBox="0 0 10.00 6.60" preserveAspectRatio="none"><path d="M1.1 1.1L5 5.1L8.9 1.1" fill="none" stroke="#3c3c3c" stroke-width="1.8" stroke-linecap="square" stroke-linejoin="miter"/></svg>
<svg class="ic" style="left:59.10px;top:239.50px;" width="17.80" height="12.70" viewBox="0 0 17.80 12.70" preserveAspectRatio="none"><path d="M0.6 11.8V2.2L1.8 0.6H6L7.4 2.2H13.2V4.8" fill="url(#gFoldB)" stroke="#c48630" stroke-width="1" stroke-linejoin="round"/><path d="M0.6 12.1L4 4.8H17.2L13.6 12.1Z" fill="url(#gFold)" stroke="#c48630" stroke-width="1" stroke-linejoin="round"/><path d="M1.6 2.4H6.6" stroke="#fff8de" stroke-width="0.8"/></svg>
<svg class="ic" style="left:64.40px;top:261.80px;" width="6.00" height="10.40" viewBox="0 0 6.00 10.40" preserveAspectRatio="none"><path d="M0.9 0.9L5.0 5.2L0.9 9.5" fill="none" stroke="#a0a0a0" stroke-width="1.65" stroke-linecap="square" stroke-linejoin="miter"/></svg>
<svg class="ic" style="left:78.00px;top:260.50px;" width="17.80" height="12.70" viewBox="0 0 17.80 12.70" preserveAspectRatio="none"><path d="M0.6 11.8V2.2L1.8 0.6H6L7.4 2.2H13.2V4.8" fill="url(#gFoldB)" stroke="#c48630" stroke-width="1" stroke-linejoin="round"/><path d="M0.6 12.1L4 4.8H17.2L13.6 12.1Z" fill="url(#gFold)" stroke="#c48630" stroke-width="1" stroke-linejoin="round"/><path d="M1.6 2.4H6.6" stroke="#fff8de" stroke-width="0.8"/></svg>
<svg class="ic" style="left:62.70px;top:283.70px;" width="10.00" height="6.60" viewBox="0 0 10.00 6.60" preserveAspectRatio="none"><path d="M1.1 1.1L5 5.1L8.9 1.1" fill="none" stroke="#3c3c3c" stroke-width="1.8" stroke-linecap="square" stroke-linejoin="miter"/></svg>
<svg class="ic" style="left:78.00px;top:281.50px;" width="17.80" height="12.70" viewBox="0 0 17.80 12.70" preserveAspectRatio="none"><path d="M0.6 11.8V2.2L1.8 0.6H6L7.4 2.2H13.2V4.8" fill="url(#gFoldB)" stroke="#c48630" stroke-width="1" stroke-linejoin="round"/><path d="M0.6 12.1L4 4.8H17.2L13.6 12.1Z" fill="url(#gFold)" stroke="#c48630" stroke-width="1" stroke-linejoin="round"/><path d="M1.6 2.4H6.6" stroke="#fff8de" stroke-width="0.8"/></svg>
<svg class="ic" style="left:83.30px;top:303.80px;" width="6.00" height="10.40" viewBox="0 0 6.00 10.40" preserveAspectRatio="none"><path d="M0.9 0.9L5.0 5.2L0.9 9.5" fill="none" stroke="#a0a0a0" stroke-width="1.65" stroke-linecap="square" stroke-linejoin="miter"/></svg>
<svg class="ic" style="left:99.00px;top:299.30px;" width="13.00" height="16.00" viewBox="0 0 13.00 16.00" preserveAspectRatio="none"><path d="M0.6 0.6H8.6L12.4 4.4V15.4H0.6Z" fill="url(#gDoc)" stroke="#b5965a" stroke-width="1.1" stroke-linejoin="round"/><path d="M8.6 0.6V4.4H12.4Z" fill="#ecd9a4" stroke="#b5965a" stroke-width="0.7"/><text x="1.2" y="13" font-family="Liberation Sans, sans-serif" font-weight="bold" font-size="13.4" fill="#25558f" stroke="#25558f" stroke-width="0.3" textLength="10" lengthAdjust="spacingAndGlyphs">.c</text></svg>
<svg class="ic" style="left:45.60px;top:324.80px;" width="6.00" height="10.40" viewBox="0 0 6.00 10.40" preserveAspectRatio="none"><path d="M0.9 0.9L5.0 5.2L0.9 9.5" fill="none" stroke="#a0a0a0" stroke-width="1.65" stroke-linecap="square" stroke-linejoin="miter"/></svg>
<svg class="ic" style="left:59.10px;top:323.50px;" width="17.80" height="12.70" viewBox="0 0 17.80 12.70" preserveAspectRatio="none"><path d="M0.6 11.8V2.2L1.8 0.6H6L7.4 2.2H13.2V4.8" fill="url(#gFoldB)" stroke="#c48630" stroke-width="1" stroke-linejoin="round"/><path d="M0.6 12.1L4 4.8H17.2L13.6 12.1Z" fill="url(#gFold)" stroke="#c48630" stroke-width="1" stroke-linejoin="round"/><path d="M1.6 2.4H6.6" stroke="#fff8de" stroke-width="0.8"/></svg>
<div class="abs" style="left:58.2px;top:317.8px;width:122px;height:19.6px;box-sizing:border-box;border:1px dotted #222"></div>
<svg class="ic" style="left:45.60px;top:345.80px;" width="6.00" height="10.40" viewBox="0 0 6.00 10.40" preserveAspectRatio="none"><path d="M0.9 0.9L5.0 5.2L0.9 9.5" fill="none" stroke="#a0a0a0" stroke-width="1.65" stroke-linecap="square" stroke-linejoin="miter"/></svg>
<svg class="ic" style="left:59.10px;top:344.50px;" width="17.80" height="12.70" viewBox="0 0 17.80 12.70" preserveAspectRatio="none"><path d="M0.6 11.8V2.2L1.8 0.6H6L7.4 2.2H13.2V4.8" fill="url(#gFoldB)" stroke="#c48630" stroke-width="1" stroke-linejoin="round"/><path d="M0.6 12.1L4 4.8H17.2L13.6 12.1Z" fill="url(#gFold)" stroke="#c48630" stroke-width="1" stroke-linejoin="round"/><path d="M1.6 2.4H6.6" stroke="#fff8de" stroke-width="0.8"/></svg>
<svg class="ic" style="left:27.10px;top:366.80px;" width="6.00" height="10.40" viewBox="0 0 6.00 10.40" preserveAspectRatio="none"><path d="M0.9 0.9L5.0 5.2L0.9 9.5" fill="none" stroke="#a0a0a0" stroke-width="1.65" stroke-linecap="square" stroke-linejoin="miter"/></svg>
<svg class="ic" style="left:40.40px;top:365.50px;" width="17.80" height="12.70" viewBox="0 0 17.80 12.70" preserveAspectRatio="none"><path d="M0.6 11.8V2.2L1.8 0.6H6L7.4 2.2H13.2V4.8" fill="url(#gFoldB)" stroke="#c48630" stroke-width="1" stroke-linejoin="round"/><path d="M0.6 12.1L4 4.8H17.2L13.6 12.1Z" fill="url(#gFold)" stroke="#c48630" stroke-width="1" stroke-linejoin="round"/><path d="M1.6 2.4H6.6" stroke="#fff8de" stroke-width="0.8"/></svg>
<svg class="ic" style="left:39.80px;top:382.10px;" width="18.40" height="18.50" viewBox="0 0 18.40 18.50" preserveAspectRatio="none"><rect x="0" y="0" width="18.4" height="18.5" fill="#3dafe5"/><text transform="translate(2.70,12.90) scale(0.720,1)" font-family="Liberation Sans, sans-serif" font-weight="bold" font-size="10.20" letter-spacing="0.90" fill="#d9effa" stroke="#d9effa" stroke-width="0.60">MX</text></svg>
<svg class="ic" style="left:42.90px;top:404.40px;" width="13.20" height="15.60" viewBox="0 0 13.20 16.00" preserveAspectRatio="none"><path d="M0.6 0.6H8.6L12.6 4.6V15.4H0.6Z" fill="url(#gDoc)" stroke="url(#gDocS)" stroke-width="1.1"/><path d="M0.6 15.4V0.6H8.6" fill="none" stroke="#cbb883" stroke-width="1.1"/><path d="M8.6 0.6V4.6H12.6Z" fill="#ecd9a4" stroke="#c9b072" stroke-width="0.6"/><path d="M3 3.6H7M3 5.8H10M3 8H10M3 10.2H10M3 12.4H8" stroke="#5179c4" stroke-width="1"/></svg>
<svg class="ic" style="left:41.90px;top:425.10px;" width="13.80" height="16.80" viewBox="0 0 13.80 16.00" preserveAspectRatio="none"><path d="M0.6 0.6H8.6L12.6 4.6V15.4H0.6Z" fill="url(#gDoc)" stroke="url(#gDocS)" stroke-width="1.1"/><path d="M0.6 15.4V0.6H8.6" fill="none" stroke="#cbb883" stroke-width="1.1"/><path d="M8.6 0.6V4.6H12.6Z" fill="#ecd9a4" stroke="#c9b072" stroke-width="0.6"/><path d="M2.6 3.6H6.6M2.6 5.8H9.6" stroke="#5179c4" stroke-width="1"/><text x="5" y="14.6" font-family="Liberation Sans, sans-serif" font-weight="bold" font-size="8" fill="#172f63" stroke="#172f63" stroke-width="0.35" textLength="8.6" lengthAdjust="spacingAndGlyphs">LD</text></svg>
<svg class="ic" style="left:41.90px;top:446.10px;" width="13.80" height="16.80" viewBox="0 0 13.80 16.00" preserveAspectRatio="none"><path d="M0.6 0.6H8.6L12.6 4.6V15.4H0.6Z" fill="url(#gDoc)" stroke="url(#gDocS)" stroke-width="1.1"/><path d="M0.6 15.4V0.6H8.6" fill="none" stroke="#cbb883" stroke-width="1.1"/><path d="M8.6 0.6V4.6H12.6Z" fill="#ecd9a4" stroke="#c9b072" stroke-width="0.6"/><path d="M2.6 3.6H6.6M2.6 5.8H9.6" stroke="#5179c4" stroke-width="1"/><text x="5" y="14.6" font-family="Liberation Sans, sans-serif" font-weight="bold" font-size="8" fill="#172f63" stroke="#172f63" stroke-width="0.35" textLength="8.6" lengthAdjust="spacingAndGlyphs">LD</text></svg>
<svg class="ic" style="left:7.70px;top:471.80px;" width="6.00" height="10.40" viewBox="0 0 6.00 10.40" preserveAspectRatio="none"><path d="M0.9 0.9L5.0 5.2L0.9 9.5" fill="none" stroke="#a0a0a0" stroke-width="1.65" stroke-linecap="square" stroke-linejoin="miter"/></svg>
<svg class="ic" style="left:21.10px;top:466.40px;" width="18.40" height="18.50" viewBox="0 0 18.40 18.50" preserveAspectRatio="none"><rect x="0" y="0" width="18.4" height="18.5" fill="#3dafe5"/><text transform="translate(2.10,13.50) scale(0.660,1)" font-family="Liberation Sans, sans-serif" font-weight="bold" font-size="10.90" letter-spacing="1.70" fill="#ffffff" stroke="#ffffff" stroke-width="0.80">IDE</text></svg>
<span class="t" style="left:376.90px;top:63.20px;font-size:15.00px;transform:scaleX(0.9484);color:#000;">main.c</span>
<span class="t" style="left:476.00px;top:63.20px;font-size:15.00px;transform:scaleX(0.9421);color:#000;">appMain.c</span>
<span class="t" style="left:598.80px;top:63.20px;font-size:15.00px;transform:scaleX(0.8981);color:#000;">HAL_cli.c</span>
<div class="ln" style="top:89.50px">1</div>
<div class="cl" style="top:89.50px"><span class="k">#include</span> <span class="s">&quot;HAL_cli.h&quot;</span></div>
<div class="ln" style="top:106.96px">2</div>
<div class="ln" style="top:124.42px">3</div>
<div class="cl" style="top:124.42px"><span class="k">#include</span> <span class="s">&quot;stdarg.h&quot;</span></div>
<div class="ln" style="top:141.88px">4</div>
<div class="cl" style="top:141.88px"><span class="k">#include</span> <span class="s">&quot;stdio.h&quot;</span></div>
<div class="ln" style="top:159.34px">5</div>
<div class="cl" style="top:159.34px"><span class="k">#include</span> <span class="s">&quot;string.h&quot;</span></div>
<div class="ln" style="top:176.80px">6</div>
<div class="ln" style="top:194.26px">7</div>
<div class="cl" style="top:194.26px"><span class="c">/********* Definitions ************************************************************</span></div>
<div class="ln" style="top:211.72px">8</div>
<div class="ln" style="top:229.18px">9</div>
<div class="cl" style="top:229.18px"><span class="k">#ifndef</span> CLI_MAX_HANDLER_COUNT</div>
<div class="ln" style="top:246.64px">10</div>
<div class="cl" style="top:246.64px"><span class="k">#define</span> CLI_MAX_HANDLER_COUNT 15 <span class="c">//Projects can override the handler count</span></div>
<div class="ln" style="top:264.10px">11</div>
<div class="cl" style="top:264.10px"><span class="k">#endif</span></div>
<div class="ln" style="top:281.56px">12</div>
<div class="ln" style="top:299.02px">13</div>
<div class="cl" style="top:299.02px"><span class="k">#define</span> CLI_MAX_INPUT_BUFFER 32</div>
<div class="ln" style="top:316.48px">14</div>
<div class="cl" style="top:316.48px"><span class="k">#define</span> CLI_MAX_ARG_COUNT 8</div>
<div class="ln" style="top:333.94px">15</div>
<div class="ln" style="top:351.40px">16</div>
<div class="cl" style="top:351.40px"><span class="k">typedef</span> <span class="k">struct</span> <span class="ty">_cli_handler_map</span>{</div>
<div class="ln" style="top:368.86px">17</div>
<div class="cl" style="top:368.86px">    <span class="k">char</span> <span class="f">cmd</span>[CLI_MAX_ARG_LEN];</div>
<div class="ln" style="top:386.32px">18</div>
<div class="cl" style="top:386.32px">    <span class="ty">cli_handler_cb</span> <span class="f">handler</span>;</div>
<div class="ln" style="top:403.78px">19</div>
<div class="cl" style="top:403.78px">} <span class="ty">cli_handler_map</span>;</div>
<div class="ln" style="top:421.24px">20</div>
<div class="ln" style="top:438.70px">21</div>
<div class="cl" style="top:438.70px"><span class="k">typedef</span> <span class="k">struct</span>{</div>
<div class="ln" style="top:456.16px">22</div>
<div class="cl" style="top:456.16px">    <span class="ty">uint8_t</span> <span class="f">handlerCnt</span>;</div>
<div class="ln" style="top:473.62px">23</div>
<div class="cl" style="top:473.62px">    <span class="ty">cli_handler_map</span> <span class="f">handler_map</span>[CLI_MAX_HANDLER_COUNT];</div>
<div class="ln" style="top:491.08px">24</div>
<div class="ln" style="top:508.54px">25</div>
<div class="cl" style="top:508.54px;height:12.8px;overflow:hidden">    <span class="k">char</span> <span class="f">inputBuf</span>[CLI_MAX_INPUT_BUFFER];</div>
<div class="ln" style="top:526.00px">26</div>
<div class="cl" style="top:526.00px">    <span class="k">char</span> *<span class="f">argv</span>[CLI_MAX_ARG_COUNT];</div>
<svg class="ic" style="left:357.80px;top:64.60px;" width="13.20" height="16.30" viewBox="0 0 13.00 16.00" preserveAspectRatio="none"><path d="M0.6 0.6H8.6L12.4 4.4V15.4H0.6Z" fill="url(#gDoc)" stroke="#b5965a" stroke-width="1.1" stroke-linejoin="round"/><path d="M8.6 0.6V4.4H12.4Z" fill="#ecd9a4" stroke="#b5965a" stroke-width="0.7"/><text x="1.2" y="13" font-family="Liberation Sans, sans-serif" font-weight="bold" font-size="13.4" fill="#25558f" stroke="#25558f" stroke-width="0.3" textLength="10" lengthAdjust="spacingAndGlyphs">.c</text></svg>
<svg class="ic" style="left:457.00px;top:64.60px;" width="13.40" height="16.30" viewBox="0 0 13.00 16.00" preserveAspectRatio="none"><path d="M0.6 0.6H8.6L12.4 4.4V15.4H0.6Z" fill="url(#gDoc)" stroke="#b5965a" stroke-width="1.1" stroke-linejoin="round"/><path d="M8.6 0.6V4.4H12.4Z" fill="#ecd9a4" stroke="#b5965a" stroke-width="0.7"/><text x="1.2" y="13" font-family="Liberation Sans, sans-serif" font-weight="bold" font-size="13.4" fill="#25558f" stroke="#25558f" stroke-width="0.3" textLength="10" lengthAdjust="spacingAndGlyphs">.c</text></svg>
<svg class="ic" style="left:579.00px;top:64.60px;" width="13.40" height="16.30" viewBox="0 0 13.00 16.00" preserveAspectRatio="none"><path d="M0.6 0.6H8.6L12.4 4.4V15.4H0.6Z" fill="url(#gDoc)" stroke="#b5965a" stroke-width="1.1" stroke-linejoin="round"/><path d="M8.6 0.6V4.4H12.4Z" fill="#ecd9a4" stroke="#b5965a" stroke-width="0.7"/><text x="1.2" y="13" font-family="Liberation Sans, sans-serif" font-weight="bold" font-size="13.4" fill="#25558f" stroke="#25558f" stroke-width="0.3" textLength="10" lengthAdjust="spacingAndGlyphs">.c</text></svg>
<svg class="ic" style="left:665.20px;top:67.70px;" width="11.30" height="11.00" viewBox="0 0 11.30 11.00" preserveAspectRatio="none"><path d="M0.6 0.6L10.7 10.4M10.7 0.6L0.6 10.4" stroke="#333" stroke-width="1.2" stroke-linecap="round"/></svg>
<svg class="ic" style="left:388.20px;top:353.60px;" width="10.60" height="10.60" viewBox="0 0 9.80 9.80" preserveAspectRatio="none"><circle cx="4.9" cy="4.9" r="4.3" fill="#e9edf3" stroke="#b7c3d4" stroke-width="1"/><path d="M2.2 4.9H7.6" stroke="#687287" stroke-width="1.5"/></svg>
<svg class="ic" style="left:388.20px;top:440.90px;" width="10.60" height="10.60" viewBox="0 0 9.80 9.80" preserveAspectRatio="none"><circle cx="4.9" cy="4.9" r="4.3" fill="#e9edf3" stroke="#b7c3d4" stroke-width="1"/><path d="M2.2 4.9H7.6" stroke="#687287" stroke-width="1.5"/></svg>
<div class="abs" style="left:399.2px;top:86.3px;width:1px;height:440px;background:#f1f1f1"></div>
</div>
<svg class="abs" style="left:0;top:0" width="874" height="536"><rect x="563.5" y="52.0" width="132.3" height="38.1" rx="7" ry="7" fill="none" stroke="#f40c0f" stroke-width="2.3"/></svg>
</body></html>
